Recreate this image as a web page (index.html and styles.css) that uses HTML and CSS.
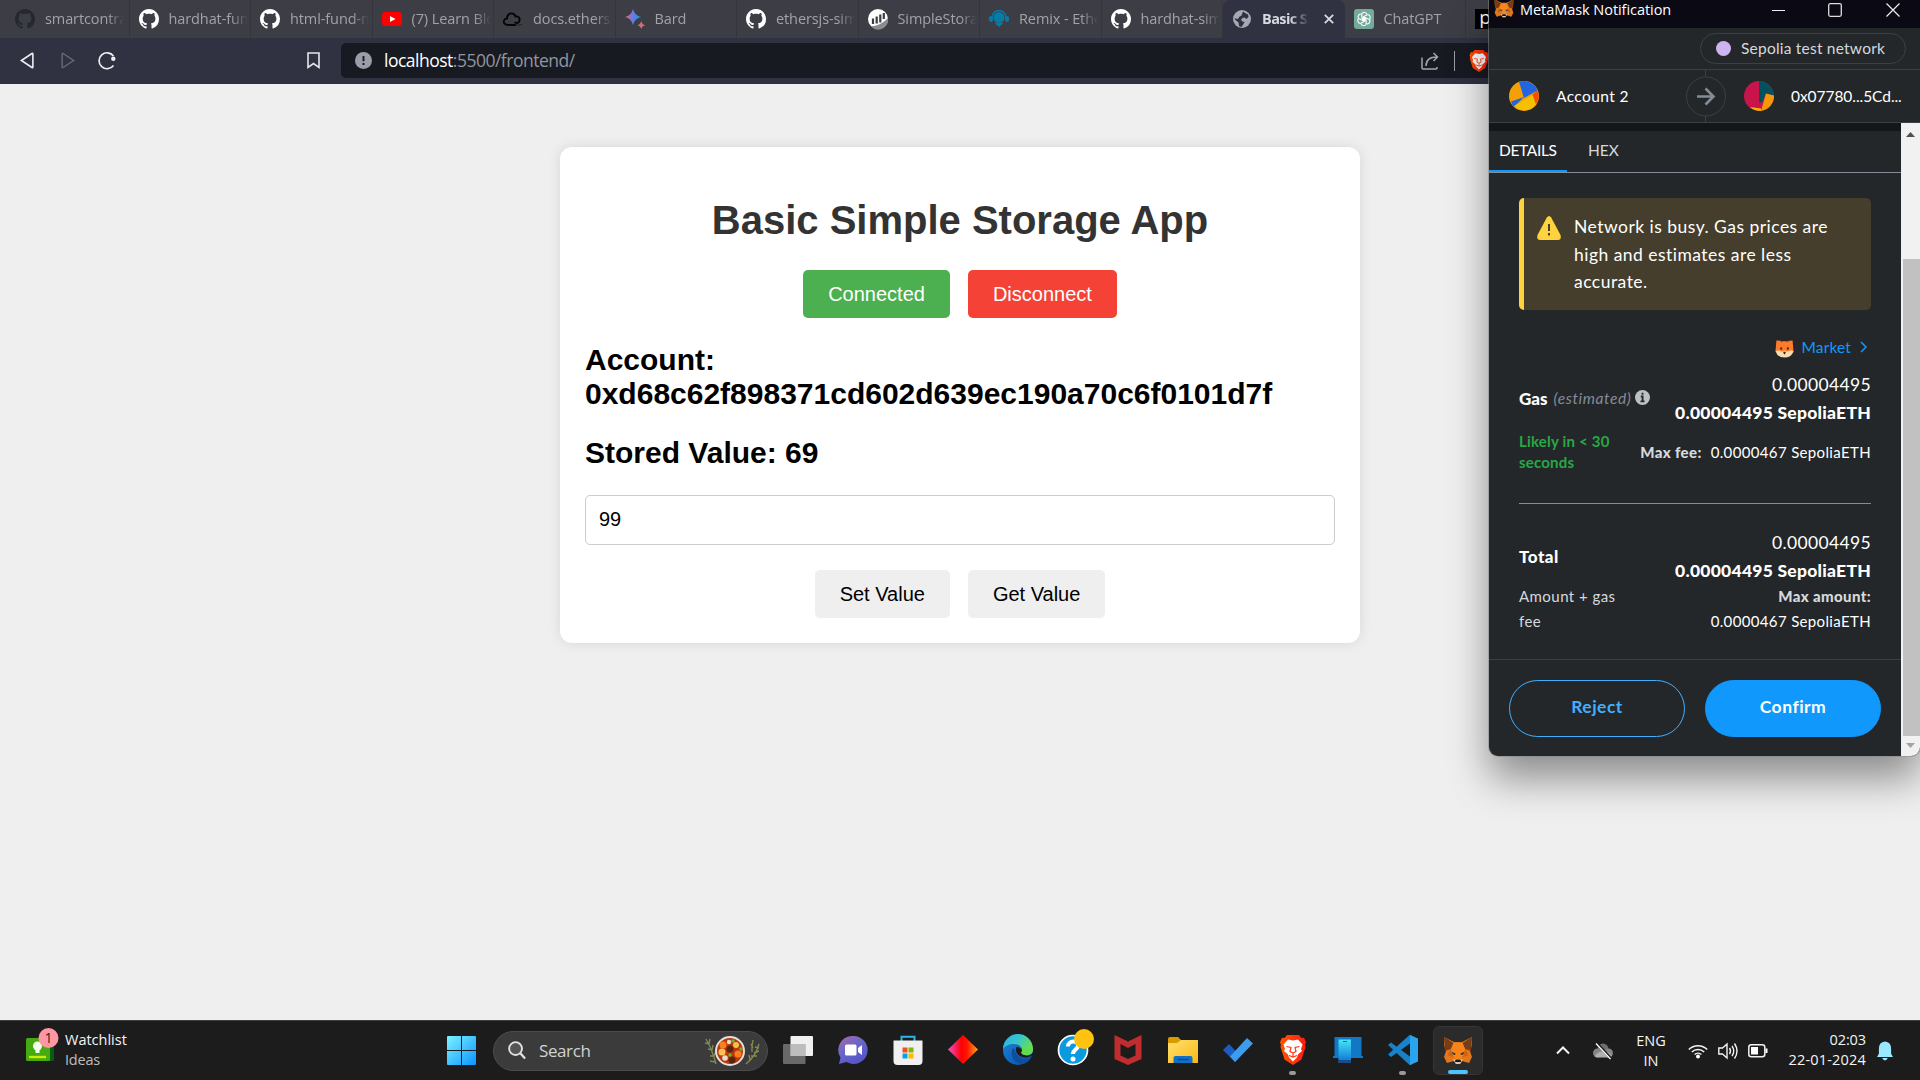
FILE: index.html
```html
<!DOCTYPE html>
<html lang="en">
<head>
<meta charset="utf-8">
<title>Basic Simple Storage App</title>
<link rel="stylesheet" href="styles.css">
</head>
<body>
<svg class="defs" aria-hidden="true">
  <defs>
    <linearGradient id="win" x1="0" y1="0" x2="1" y2="1"><stop offset="0" stop-color="#7df3ff"/><stop offset="1" stop-color="#0a94ff"/></linearGradient>
    <linearGradient id="bard" x1="0" y1="0" x2="1" y2="0"><stop offset="0" stop-color="#e8705f"/><stop offset=".4" stop-color="#8a70d6"/><stop offset=".65" stop-color="#3a8de8"/><stop offset="1" stop-color="#3a8de8"/></linearGradient>
    <linearGradient id="chat" x1="0" y1="0" x2=".6" y2="1"><stop offset="0" stop-color="#a96aa8"/><stop offset=".5" stop-color="#6a66c8"/><stop offset="1" stop-color="#5555c8"/></linearGradient>
    <linearGradient id="dia" x1="0" y1="0" x2="1" y2="0"><stop offset="0" stop-color="#f04fd0"/><stop offset=".45" stop-color="#ff0000"/><stop offset=".65" stop-color="#ff1a00"/><stop offset="1" stop-color="#ffa820"/></linearGradient>
    <linearGradient id="edgeTop" x1="0" y1="0" x2="1" y2=".5"><stop offset="0" stop-color="#2bb0e8"/><stop offset=".5" stop-color="#36c4d0"/><stop offset="1" stop-color="#67e04c"/></linearGradient>
    <linearGradient id="edgeLow" x1="0" y1="0" x2="1" y2="1"><stop offset="0" stop-color="#1b86dd"/><stop offset="1" stop-color="#0c4c9c"/></linearGradient>
    <linearGradient id="folder" x1="0" y1="0" x2="1" y2="1"><stop offset="0" stop-color="#ffe070"/><stop offset="1" stop-color="#fdb813"/></linearGradient>
    <linearGradient id="phone" x1="0" y1="0" x2="0" y2="1"><stop offset="0" stop-color="#48e4f8"/><stop offset="1" stop-color="#0b6fd0"/></linearGradient>
    <linearGradient id="brave" x1="0" y1="0" x2="1" y2="0"><stop offset="0" stop-color="#ff5500"/><stop offset="1" stop-color="#ff1a10"/></linearGradient>
    <symbol id="github" viewBox="0 0 16 16"><path d="M8 0C3.58 0 0 3.58 0 8c0 3.54 2.29 6.53 5.47 7.59.4.07.55-.17.55-.38 0-.19-.01-.82-.01-1.49-2.01.37-2.53-.49-2.69-.94-.09-.23-.48-.94-.82-1.13-.28-.15-.68-.52-.01-.53.63-.01 1.08.58 1.23.82.72 1.21 1.87.87 2.33.66.07-.52.28-.87.51-1.07-1.78-.2-3.64-.89-3.64-3.95 0-.87.31-1.59.82-2.15-.08-.2-.36-1.02.08-2.12 0 0 .67-.21 2.2.82.64-.18 1.32-.27 2-.27s1.36.09 2 .27c1.53-1.04 2.2-.82 2.2-.82.44 1.1.16 1.92.08 2.12.51.56.82 1.27.82 2.15 0 3.07-1.87 3.75-3.65 3.95.29.25.54.73.54 1.48 0 1.07-.01 1.93-.01 2.2 0 .21.15.46.55.38A8.01 8.01 0 0 0 16 8c0-4.42-3.58-8-8-8z"/></symbol>
    <symbol id="fox" viewBox="0 0 30 30">
      <path fill="#e2761b" d="M1 2l10 5h8l10-5v8l-2 6 2 6-3 6-7-2-2 3h-4l-2-3-7 2-3-6 2-6-2-6z"/>
      <path fill="#763d16" d="M1 2l9.500 6-2.500 6-6 2zM29 2l-9.500 6 2.500 6 6 2z"/>
      <path fill="#f6851b" d="M10.500 8h9l2.500 6 5 6-8 1-2 5h-4l-2-5-8-1 5-6z"/>
      <path fill="#cd6116" d="M8 14l2 8-6-2zM22 14l-2 8 6-2z"/>
      <path fill="#233447" d="M9 17l3.500 1.500-.500 1.500-2.500-.8zM21 17l-3.500 1.500.500 1.500 2.500-.8z"/>
      <path fill="#d7c1b3" d="M10 24.500l2.500-.5h5l2.500.5-3 4.500h-4z"/>
      <path fill="#161616" d="M12.500 24.500h5l.500 2.500h-6z"/>
    </symbol>
    <symbol id="lion" viewBox="0 0 26 30">
      <path fill="url(#brave)" d="M7 0h12l2.500 3 2.500-.2L26 7l-1 3 .5 2-4 12.500L13 30l-8.500-5.500L.5 12 1 10 0 7l2-4.200 2.500.2z"/>
      <path fill="#fff" d="M8 4.500l5 1 5-1 4.500 5-1.500 4.500 1 2-4 3.500-1 3-4 4-4-4-1-3-4-3.500 1-2L3.500 9.500z"/>
      <path fill="none" stroke="#ff3a10" stroke-width="1.200" d="M6.500 11.500l4.500 1-1 4 3 1.500 3-1.500-1-4 4.500-1M9 20.500l4 1.500 4-1.500M13 18v3.500"/>
    </symbol>
  </defs>
</svg>

<div class="desktop">
  <header class="tabs">
    <div class="tab first"><svg class="fav dim"><use href="#github"/></svg><span class="label">smartcontract</span></div>
    <div class="tab"><svg class="fav"><use href="#github"/></svg><span class="label">hardhat-fund-me</span></div>
    <div class="tab"><svg class="fav"><use href="#github"/></svg><span class="label">html-fund-me</span></div>
    <div class="tab"><svg class="fav" viewBox="0 0 20 20"><rect y="3" width="20" height="14" rx="3.500" fill="#f00"/><path d="M8 7l5.500 3L8 13z" fill="#fff"/></svg><span class="label">(7) Learn Block</span></div>
    <div class="tab"><svg class="fav" viewBox="0 0 20 20"><path d="M13 16H5.500C2 16 0 14 1 11.500c.5-1.500 2-2 3-2C4 6 6.500 4 9 4.500c2 0 3 1.500 3.500 3 3-.5 4.500 1.500 4 4s-3.500 3.500-5 1.500" fill="none" stroke="#050505" stroke-width="1.900"/><path d="M12 15q3 2 7 .5" fill="none" stroke="#222" stroke-width="1"/></svg><span class="label">docs.ethers.org</span></div>
    <div class="tab"><svg class="fav" viewBox="0 0 20 20"><path fill="url(#bard)" d="M8 0q1.500 6.500 8 8-6.500 1.500-8 8-1.500-6.500-8-8 6.500-1.500 8-8z"/><path fill="#d8677f" d="M16.300 12.300q.7 3.200 3.700 4-3 .8-3.700 3.700-.8-2.900-3.700-3.700 2.900-.8 3.700-4z"/></svg><span class="label">Bard</span></div>
    <div class="tab"><svg class="fav"><use href="#github"/></svg><span class="label">ethersjs-simple</span></div>
    <div class="tab"><svg class="fav" viewBox="0 0 20 20"><circle cx="10" cy="10" r="10" fill="#fff"/><path d="M5 9.500v5.500M8.700 7.500v7M12.300 5.500v8M15.800 4v6" stroke="#3d3d45" stroke-width="2.200"/><path d="M3 17.500Q14 16 20 9a10 10 0 0 1-17 8.500z" fill="#8b8b90"/></svg><span class="label">SimpleStorage</span></div>
    <div class="tab"><svg class="fav" viewBox="0 0 20 20"><path d="M3 8.500a7 7 0 0 1 14 0" fill="none" stroke="#077aa5" stroke-width="1.400"/><circle cx="10" cy="8.500" r="5.500" fill="#077aa5"/><rect y="7" width="4" height="6" rx="2" fill="#077aa5"/><rect x="16" y="7" width="4" height="6" rx="2" fill="#077aa5"/><path d="M5.500 14h9L10 18z" fill="#077aa5"/></svg><span class="label">Remix - Ethereum</span></div>
    <div class="tab"><svg class="fav"><use href="#github"/></svg><span class="label">hardhat-simple</span></div>
    <div class="tab active"><svg class="fav" viewBox="0 0 20 20"><circle cx="10" cy="10" r="9" fill="#a5a9b1"/><path d="M11 2.500l2 1.500 3 1.500.5 2.500-2 2-2-1.500-2 .5-1.500 2 1.500 1.500 2 .5-1 2-2 3-2.500-1-.5-3.500L3 10.500 2.500 9 5 10l1.500-.5L7 8l2.500-1.500z" fill="#303242"/></svg><span class="label short">Basic Simple</span><svg class="tab-close" viewBox="0 0 10 10"><path d="M.8.8l8.400 8.400M9.200.8L.8 9.200" stroke="#d8d9de" stroke-width="1.800"/></svg></div>
    <div class="tab"><svg class="fav" viewBox="0 0 20 20"><rect width="20" height="20" rx="3" fill="#74aa9c"/><g fill="none" stroke="#fff" stroke-width="1.100"><path id="kn" d="M8 4.500a3 3 0 0 1 5.200 1.200L9.500 7.900v4.300"/><use href="#kn" transform="rotate(60 10 10)"/><use href="#kn" transform="rotate(120 10 10)"/><use href="#kn" transform="rotate(180 10 10)"/><use href="#kn" transform="rotate(240 10 10)"/><use href="#kn" transform="rotate(300 10 10)"/></g></svg><span class="label">ChatGPT</span></div>
    <div class="tab"><span class="fav-p">p</span></div>
  </header>

  <nav class="toolbar">
    <svg class="ic back" viewBox="0 0 15 18"><path d="M12.800 1.500L1.500 9l11.300 7.500c.6.300 1 0 1-.6V2.100c0-.6-.4-.9-1-.6z" fill="none" stroke="#eceef2" stroke-width="1.700"/></svg>
    <svg class="ic fwd" viewBox="0 0 15 18"><path d="M2.200 1.500L13.500 9 2.200 16.500c-.6.300-1 0-1-.6V2.100c0-.6.400-.9 1-.6z" fill="none" stroke="#676a77" stroke-width="1.500"/></svg>
    <svg class="ic reload" viewBox="0 0 18 18"><path d="M15.500 4A8 8 0 1 0 15.500 13.500" fill="none" stroke="#eceef2" stroke-width="1.700"/><circle cx="15.300" cy="6.700" r="2.200" fill="#eceef2"/></svg>
    <svg class="ic bookmark" viewBox="0 0 13 17"><path d="M1 1h11v14.500l-5.500-4-5.500 4z" fill="none" stroke="#e4e6ea" stroke-width="1.600"/></svg>
    <div class="urlbar">
      <svg class="info" viewBox="0 0 17 17"><circle cx="8.500" cy="8.500" r="8.500" fill="#9a9ea8"/><path d="M8.500 4v5.300M8.500 11v2" stroke="#181a22" stroke-width="1.900"/></svg>
      <span class="url"><b>localhost</b>:5500/frontend/</span>
      <svg class="share" viewBox="0 0 18 18"><path d="M1 5.500V16q0 1 1 1h13q1 0 1-1v-1M5 14C5 8 8 5 16 5M12.500 1L16.500 5l-4 4" fill="none" stroke="#a3a6ad" stroke-width="1.500"/></svg>
      <i class="split"></i>
      <svg class="shield"><use href="#lion"/></svg>
    </div>
  </nav>

  <main class="page">
    <section class="card">
      <h1>Basic Simple Storage App</h1>
      <div class="buttons"><button class="btn ok">Connected</button><button class="btn danger">Disconnect</button></div>
      <h2>Account:<br>0xd68c62f898371cd602d639ec190a70c6f0101d7f</h2>
      <h2>Stored Value: 69</h2>
      <input class="value" value="99">
      <div class="buttons"><button class="btn">Set Value</button><button class="btn">Get Value</button></div>
    </section>
  </main>

  <footer class="taskbar">
    <div class="widget">
      <svg class="w-icon" viewBox="0 0 34 36"><rect x="20" y="10" width="8" height="23" rx="1.500" fill="#0b5a12"/><rect y="10" width="24" height="23" rx="1.500" fill="#45ab10"/><circle cx="11.500" cy="18" r="4.500" fill="#f4fbe8"/><path d="M9.500 21h4v4h-4z" fill="#f4fbe8"/><path d="M3 29h17" stroke="#c8ee00" stroke-width="2.400"/><circle cx="22.500" cy="10" r="10" fill="#ff97a3"/><text x="22.500" y="15.200" text-anchor="middle" class="w-count">1</text></svg>
      <p class="w-text"><span>Watchlist</span><span class="sub">Ideas</span></p>
    </div>
    <svg class="start" viewBox="0 0 29 29"><path fill="url(#win)" d="M1 0h13v14H0V1q0-1 1-1zM15 0h13q1 0 1 1v13H15zM0 15h14v14H1q-1 0-1-1zM15 15h14v13q0 1-1 1H15z"/></svg>
    <div class="search">
      <svg class="mag" viewBox="0 0 19 20"><circle cx="8" cy="8" r="6.800" fill="#555" stroke="#e2e2e2" stroke-width="2"/><path d="M13 13l5 5.500" stroke="#e2e2e2" stroke-width="2.400"/></svg>
      <span class="search-text">Search</span>
      <svg class="food" viewBox="0 0 56 30"><g fill="none" stroke="#7f8a50" stroke-width="1.400"><path d="M1 3q6 10 10 25M0 7l4 1 1-5M3 13l4 1 1-5M5 20l4 0 2-5M5 25l5 1M54 8q-3 12-13 20M48 4l-1 6 0 6M46 8l2 4M54 15l-5 2M52 20l-6 0M44 19l1 5M50 11l4 1"/></g><circle cx="25" cy="15" r="14" fill="#b9380c" stroke="#e4dfdc" stroke-width="2"/><g><circle cx="18" cy="9" r="3.500" fill="#ff7f1e"/><circle cx="17" cy="16" r="3.500" fill="#ffc35a"/><circle cx="31" cy="9" r="3" fill="#f6c04f"/><circle cx="33" cy="18" r="3.500" fill="#ff7f1e"/><circle cx="25" cy="13" r="3.500" fill="#5a2410"/><circle cx="27" cy="24" r="3.500" fill="#5a2410"/><circle cx="20" cy="22" r="2.800" fill="#e8dccd"/><circle cx="24" cy="6" r="2.200" fill="#e8dccd"/><circle cx="36" cy="13" r="1.700" fill="#70b52c"/><circle cx="28" cy="5" r="1.700" fill="#70b52c"/><circle cx="25" cy="19" r="1.700" fill="#70b52c"/></g></svg>
    </div>
    <div class="apps">
      <div class="app"><svg viewBox="0 0 30 30"><rect x="7.500" y="1" width="22.500" height="20" rx="1" fill="#f0f0f0"/><rect y="9" width="22.500" height="20" rx="1" fill="#8a8a8a" fill-opacity=".7"/><path d="M7.500 9h15v12h-15z" fill="#bdbdbd"/></svg></div>
      <div class="app"><svg viewBox="0 0 30 30"><path d="M15.500 1a14 14 0 1 1-7 26L1 29l1.500-6.500A14 14 0 0 1 15.500 1z" fill="url(#chat)"/><rect x="7" y="9.500" width="11.500" height="11" rx="1.500" fill="#fff"/><path d="M20 13l4-3v10l-4-3z" fill="#fff"/></svg></div>
      <div class="app"><svg viewBox="0 0 30 30"><path d="M8.500 7V1.800h13V7" fill="none" stroke="#29b5e8" stroke-width="2"/><path d="M.5 5.500h29V26q0 4-4 4h-21q-4 0-4-4z" fill="#f0f0f0"/><path d="M8.500 2v4.500h13V2" fill="none"/><path d="M9.500 12.500h5v5h-5z" fill="#f25022"/><path d="M15.500 12.500h5v5h-5z" fill="#7fba00"/><path d="M9.500 18.500h5v5h-5z" fill="#00a4ef"/><path d="M15.500 18.500h5v5h-5z" fill="#ffb900"/></svg></div>
      <div class="app"><svg viewBox="0 0 30 30"><path d="M15 0l15 14.500L15 29 0 14.500z" fill="url(#dia)"/></svg></div>
      <div class="app"><svg viewBox="0 0 30 30"><circle cx="15" cy="15" r="15" fill="url(#edgeLow)"/><path d="M0 14A15 15 0 0 1 30 14c0 5-4 7-8 6-3-.5-5-2-3-4 1-3-2-7-8-7-5 0-9 2-11 5z" fill="url(#edgeTop)"/><path d="M10 13c-4 7 1 16 10 16 4-1 6-3 8-6-6 3-15 0-16-8z" fill="#0d4f9e"/><path d="M13.500 12c-2 4 1 9 6 10 4 1 7 0 9.500-1.800l1 2.800h1V17l-4 3c-4 1-9 0-8-3 1-2-2-5-5.500-5z" fill="#1c1c1c"/><path d="M30 14c0 5-4 7-8 6-3-.5-5-2-3-4 .5-2 0-3-1-5z" fill="#62db50"/></svg></div>
      <div class="app"><svg class="wide" viewBox="0 0 36 36"><ellipse cx="15" cy="21" rx="14.500" ry="14.500" fill="#0a9ade" stroke="#fff" stroke-width="1.700"/><path d="M10 17.500c0-7 11-6 10-.5-.5 3.500-5 3.500-5 8" fill="none" stroke="#fff" stroke-width="4"/><circle cx="15" cy="30" r="2.500" fill="#fff"/><circle cx="26" cy="10" r="10" fill="#ffc20e"/></svg></div>
      <div class="app"><svg viewBox="0 0 30 30"><path d="M1.500 0L15 6.500 28.500 0v24L15 30 1.500 24zM7.500 9v11.500l7.500 3.500 7.500-3.500V9L15 13z" fill="#c12c2e" fill-rule="evenodd"/></svg></div>
      <div class="app"><svg viewBox="0 0 30 30"><path d="M0 4q0-2 2-2h8l3 3v6H0z" fill="#d89b00"/><path d="M0 8h9l4-3h17v23H0z" fill="url(#folder)"/><path d="M5.500 28v-5q0-2 2-2h15q2 0 2 2v5z" fill="#1070c8"/><path d="M9.500 24.500h11" stroke="#084a90" stroke-width="1.500"/></svg></div>
      <div class="app"><svg viewBox="0 0 30 30"><path d="M0 15l6-6 11.500 12L12 27z" fill="#1b5cbe"/><path d="M12 27l-5-5.500L24 3l6 5.500z" fill="#3b9cf0"/></svg></div>
      <div class="app run"><svg viewBox="0 0 30 30"><use href="#lion" x="2" width="26" height="30"/></svg></div>
      <div class="app"><svg viewBox="0 0 30 30"><path d="M1.500 2h27v19H30v2H0v-2h1.500z" fill="#1277c4"/><path d="M5.500 4.500H18V28H5.500z" fill="url(#phone)"/><path d="M5.500 25H18v3H5.500z" fill="#1a4b86"/><path d="M10 6.500h4" stroke="#085"/></svg></div>
      <div class="app run"><svg viewBox="0 0 30 30"><path d="M0 10l3-2.500L24 23v6.500L21.500 30z" fill="#1a7fc4"/><path d="M0 19.500L3 22 24 7V.5L21.500 0z" fill="#1583cf"/><path d="M22 0l8 3.500v23L22 30z" fill="#2aa4ee"/></svg></div>
      <div class="app current"><svg viewBox="0 0 30 30"><use href="#fox" width="30" height="30"/></svg></div>
    </div>
    <div class="tray">
      <svg class="caret" viewBox="0 0 14 9"><path d="M1 7.500l6-6 6 6" fill="none" stroke="#f2f2f2" stroke-width="2"/></svg>
      <svg class="cloud" viewBox="0 0 20 18"><circle cx="10" cy="7" r="5.500" fill="#6e6e6e"/><circle cx="4.500" cy="11" r="4.500" fill="#858585"/><circle cx="15.500" cy="11" r="4.500" fill="#858585"/><path d="M2 14q3-5 8-4.500 6 0 9 4-1 2-3 2H5q-2 0-3-1.500z" fill="#b0b0b0"/><path d="M3.500 1L18 16.500" stroke="#1c1c1c" stroke-width="2.600"/><path d="M3 1.500L17.500 17" stroke="#fff" stroke-width="1.300"/></svg>
      <p class="lang"><span>ENG</span><span>IN</span></p>
      <svg class="wifi" viewBox="0 0 20 16"><g fill="none" stroke="#f2f2f2" stroke-width="1.500"><path d="M.8 6.500a13 13 0 0 1 18.400 0M3.800 9a8.800 8.800 0 0 1 12.400 0M6.600 11.500a5 5 0 0 1 6.800 0"/></g><circle cx="10" cy="13.500" r="2" fill="#fff"/></svg>
      <svg class="vol" viewBox="0 0 20 18"><g fill="none" stroke="#f2f2f2" stroke-width="1.400"><path d="M.8 6h3.700L9 2v14l-4.500-4H.8zM11.500 6q2 3 0 6M14 4q3.500 5 0 10M16.500 1.500q5 7.500 0 15"/></g></svg>
      <svg class="bat" viewBox="0 0 20 14"><rect x=".8" y=".8" width="16" height="12" rx="2.500" fill="none" stroke="#f2f2f2" stroke-width="1.500"/><rect x="3" y="3" width="7" height="7.500" fill="#fff"/><path d="M18.500 4.500v4.500" stroke="#fff" stroke-width="2"/></svg>
      <p class="clock"><span>02:03</span><span class="date">22-01-2024</span></p>
      <svg class="bell" viewBox="0 0 17 20"><path d="M2 13V8q0-7.500 6.500-8Q15 .5 15 8v5l2 3.500H0zM5.500 17.500h6q-1 2.500-3 2.500t-3-2.500z" fill="#98e9ff"/></svg>
    </div>
  </footer>

  <aside class="wallet">
    <div class="titlebar">
      <svg class="t-fox"><use href="#fox"/></svg>
      <span class="t-title">MetaMask Notification</span>
      <svg class="winctl" viewBox="0 0 128 16"><path d="M0 8.500h13M114.500 1.500l13 13M127.500 1.500l-13 13" stroke="#eee" stroke-width="1.200"/><rect x="56.700" y="1.700" width="12.600" height="12.600" rx="1.500" fill="none" stroke="#ddd" stroke-width="1.300"/></svg>
    </div>
    <div class="network"><div class="pill"><i></i><span>Sepolia test network</span></div></div>
    <div class="parties">
      <svg class="avatar" viewBox="0 0 30 30"><circle cx="15" cy="15" r="15" fill="#f3a006"/><path d="M10 .8A15 15 0 0 1 28.500 9.500L15 17z" fill="#2365e0"/><path d="M2 20.500L15 16l-10 10q-2-2-3-5.500z" fill="#2365e0"/><path d="M5 25L23.500 14 28 22.500A15 15 0 0 1 5 25z" fill="#f5c000"/><path d="M23.500 13.500l5-4a15 15 0 0 1-1.500 14z" fill="#fb4a09"/></svg>
      <span class="from">Account 2</span>
      <svg class="arrow" viewBox="0 0 40 52"><path d="M19.500 0v6M19.500 46v6" stroke="#3b4046"/><circle cx="20" cy="26.500" r="19.500" fill="none" stroke="#3b4046"/><path d="M11 26.500H27.500M19.500 18.500l8 8-8 8" fill="none" stroke="#848c96" stroke-width="2.600"/></svg>
      <svg class="avatar" viewBox="0 0 30 30"><circle cx="15" cy="15" r="15" fill="#c8144a"/><path d="M15 0a15 15 0 0 1 15 14.500l-8-2-4 9h-3z" fill="#03515c"/><path d="M22 12.500l8 2A15 15 0 0 1 17 30z" fill="#f3980a"/><path d="M6 26l11 1.500V30q-7 0-11-4z" fill="#f5b800"/></svg>
      <span class="to">0x07780...5Cd...</span>
    </div>
    <div class="body">
      <div class="content">
        <div class="wtabs"><span class="wtab on">DETAILS</span><span class="wtab">HEX</span></div>
        <div class="details">
          <div class="warning">
            <svg viewBox="0 0 24 24"><path d="M9.800 1.500q2.200-3 4.400 0L23.500 19q1.500 5-3 5h-17q-4.500 0-3-5z" fill="#ffd33d"/><path d="M12 8v7M12 17v2.500" stroke="#453e2c" stroke-width="2"/></svg>
            <p>Network is busy. Gas prices are<br>high and estimates are less<br>accurate.</p>
          </div>
          <div class="market">
            <svg class="emoji" viewBox="0 0 20 20"><path d="M1.500 1.500l5.500.5h6l5.500-.5 1 12.500-9.500 5L.5 13z" fill="#ff7a2a"/><path d="M6 .5l2 2h4l2-2v2.500H6z" fill="#5a2c12"/><path d="M.5 12.500q4-1 6.500 1l3-1.500 3 1.500q2.500-2 6.500-1Q17.500 19.500 10 19.500T.5 12.500z" fill="#fbdcae"/><path d="M5.500 9h2v2h-2zM12.500 9h2v2h-2zM8.500 13.500h3L10.500 16h-1z" fill="#33221a"/></svg>
            <span>Market</span>
            <svg class="chev" viewBox="0 0 7 12"><path d="M1 1l5 5-5 5" fill="none" stroke="#1098fc" stroke-width="1.500"/></svg>
          </div>
          <div class="row gas">
            <div class="name"><b>Gas</b><em>(estimated)</em><svg viewBox="0 0 15 15"><circle cx="7.500" cy="7.500" r="7.500" fill="#bbc0c5"/><path d="M7.500 2.700v2M5.800 6.500h1.800v4.800M5.500 11.300h4" stroke="#24272a" stroke-width="1.800" fill="none"/></svg></div>
            <div class="amount"><span>0.00004495</span><b>0.00004495 SepoliaETH</b></div>
          </div>
          <div class="row eta">
            <div class="likely">Likely in &lt; 30<br>seconds</div>
            <div class="max"><b>Max fee:</b><span>0.0000467 SepoliaETH</span></div>
          </div>
          <div class="row total">
            <div class="name"><b class="tot">Total</b></div>
            <div class="amount"><span>0.00004495</span><b>0.00004495 SepoliaETH</b></div>
          </div>
          <div class="row sum">
            <div class="what">Amount + gas<br>fee</div>
            <div class="max stack"><b class="ma">Max amount:</b><span>0.0000467 SepoliaETH</span></div>
          </div>
        </div>
        <div class="actions"><button class="act reject">Reject</button><button class="act confirm">Confirm</button></div>
      </div>
      <div class="scrollbar">
        <svg viewBox="0 0 19 24"><path d="M5 14l4.500-5 4.500 5z" fill="#505050"/></svg>
        <i class="thumb"></i>
        <svg class="down" viewBox="0 0 19 20"><path d="M5 7l4.500 5L14 7z" fill="#a3a3a3"/></svg>
      </div>
    </div>
  </aside>
</div>
</body>
</html>
```
FILE: styles.css
```css
* { box-sizing: border-box; }
body { margin: 0; overflow: hidden; font-family: "Open Sans", "Noto Sans", sans-serif; }
p { margin: 0; }
svg { display: block; flex: none; overflow: visible; }
button, input { font: inherit; margin: 0; }
.defs { position: absolute; width: 0; height: 0; }
.desktop { position: relative; width: 1920px; height: 1080px; display: flex; flex-direction: column; overflow: hidden; }

/* Browser tabs */
.tabs { height: 38px; flex: none; display: flex; padding-left: 6px; background: #3d3d45; overflow: hidden; }
.tab { width: 121.500px; height: 38px; flex: none; display: flex; align-items: center; gap: 10px; padding-left: 9px; border-right: 1px solid #35353c; }
.tab.first { width: 123.500px; }
.fav { width: 20px; height: 20px; fill: #fff; }
.dim { fill: #24292f; }
.label { width: 80px; overflow: hidden; white-space: nowrap; font-size: 14.500px; letter-spacing: -.1px; line-height: 24px; color: #a2a2a8; mask-image: linear-gradient(90deg, #000 62px, transparent 79px); }
.tab.active { background: #303242; border-color: #303242; border-radius: 8px 8px 0 0; }
.short { width: 47px; font-weight: 700; letter-spacing: -.6px; color: #d8d9de; mask-image: linear-gradient(90deg, #000 28px, transparent 47px); }
.tab-close { width: 10px; height: 10px; margin-left: 5px; }
.fav-p { width: 20px; height: 20px; background: #000; color: #fff; font-size: 19px; line-height: 17px; text-align: center; }

/* Navigation bar */
.toolbar { height: 46px; flex: none; display: flex; align-items: center; padding: 5px 0 6px 20px; background: #303242; }
.back { width: 14px; height: 17px; }
.fwd { width: 14px; height: 17px; margin-left: 27px; }
.reload { width: 18px; height: 18px; margin-left: 23px; }
.bookmark { width: 13px; height: 17px; margin-left: 191px; }
.urlbar { width: 1200px; height: 35px; margin-left: 21px; padding-left: 14px; display: flex; align-items: center; border-radius: 5px; background: #181a22; flex: none; }
.info { width: 17px; height: 17px; }
.url { width: 1037px; margin-left: 12px; padding-bottom: 1px; font-size: 17.500px; letter-spacing: -.5px; color: #92959d; }
.url b { font-weight: 400; color: #fff; }
.share { width: 18px; height: 18px; }
.split { width: 1px; height: 20px; margin: 0 14px 0 15px; background: #9a9da5; }
.shield { width: 20px; height: 22px; }

/* Storage app */
.page { flex: 1; display: flex; justify-content: center; align-items: flex-start; padding-top: 63px; background: #efefef; font-family: "Liberation Sans", Arial, sans-serif; }
.card { width: 800px; height: 496px; padding: 27px 25px 25px; border-radius: 12px; background: #fff; box-shadow: 0 0 13px rgba(0, 0, 0, .1); display: flex; flex-direction: column; }
h1 { margin: 22px 0 26px; font-size: 40px; line-height: 48px; text-align: center; color: #333; }
h2 { margin: 25px 0 0; font-size: 30px; line-height: 34px; color: #000; }
h2 + h2 { margin: 25px 0 25px; }
.buttons { display: flex; justify-content: center; gap: 18px; }
.btn { height: 48px; padding: 0 25px; border: 0; border-radius: 5px; font-size: 20px; color: #000; background: #efefef; }
.ok { background: #4caf50; color: #fff; }
.danger { background: #f44336; color: #fff; }
.value { width: 100%; height: 50px; margin-bottom: 25px; padding: 0 13px 2px; border: 1px solid #ccc; border-radius: 5px; font-size: 20px; color: #000; }

/* Taskbar */
.taskbar { height: 60px; flex: none; display: flex; align-items: center; padding: 0 27px 0 26px; border-top: 1px solid #3b4040; background: #1c1c1c; color: #f4f4f4; font-size: 14.500px; }
.widget { width: 421px; display: flex; align-items: center; gap: 4px; }
.w-icon { width: 34px; height: 36px; margin-bottom: 10px; }
.w-count { font-size: 14px; fill: #222; }
.w-text { display: flex; flex-direction: column; line-height: 20px; letter-spacing: 0; margin: 0 0 2px 1px; }
.sub { color: #bdbdbd; letter-spacing: -.2px; }
.start { width: 29px; height: 29px; }
.search { width: 275px; height: 40px; margin-left: 17px; padding: 0 6px 0 14px; display: flex; align-items: center; border: 1px solid #4c4c4c; border-radius: 20px; background: #3b3b3b; }
.mag { width: 18px; height: 19px; }
.search-text { flex: 1; margin-left: 13px; font-size: 17px; letter-spacing: -.4px; color: #d2d2d2; }
.food { width: 56px; height: 30px; }
.apps { display: flex; margin-left: 2px; }
.app { position: relative; width: 55px; height: 49px; display: flex; align-items: center; justify-content: center; padding-bottom: 1px; }
.app svg { width: 30px; height: 30px; }
.app .wide { width: 36px; height: 36px; margin: -6px 0 0 6px; }
.app.run::after, .app.current::after { content: ""; position: absolute; left: 24px; bottom: 0; width: 7px; height: 4px; border-radius: 2px; background: #999; }
.app.current { width: 50px; margin-left: 2.500px; border-radius: 6px; background: #2b2b2b; border: 1px solid #353535; }
.app.current::after { left: 14px; width: 20px; background: #4cc2ff; }
.tray { margin-left: auto; display: flex; align-items: center; }
.tray p { display: flex; flex-direction: column; line-height: 20px; }
.caret { width: 14px; height: 9px; }
.cloud { width: 20px; height: 18px; margin-left: 23px; }
.lang { width: 40px; margin-left: 18px; align-items: center; }
.wifi { width: 20px; height: 16px; margin-left: 17px; }
.vol { width: 20px; height: 18px; margin-left: 10px; }
.bat { width: 20px; height: 14px; margin-left: 10px; }
.clock { width: 98px; margin-bottom: 2px; align-items: flex-end; letter-spacing: -.1px; }
.date { letter-spacing: .18px; }
.bell { width: 16px; height: 20px; margin-left: 11px; }

/* Wallet popup window */
.wallet { position: absolute; z-index: 2; left: 1489px; top: 0; width: 431px; height: 756px; display: flex; flex-direction: column; border-radius: 0 0 9px 9px; background: #24272a; color: #fff; font-family: Lato, "Open Sans", sans-serif; font-size: 15px; box-shadow: 0 0 0 1px #8888, 0 22px 40px rgba(0, 0, 0, .42); }
.wallet b { font-weight: 900; }
.titlebar { height: 28px; flex: none; display: flex; align-items: flex-start; padding-left: 5px; background: #0b0a14; font-family: "Open Sans", sans-serif; }
.t-fox { width: 20px; height: 20px; margin-top: -2px; }
.t-title { width: 252px; margin-left: 6px; font-size: 14.500px; line-height: 20px; letter-spacing: -.05px; white-space: nowrap; }
.winctl { width: 128px; height: 16px; margin-top: 2px; }
.network { height: 42px; flex: none; display: flex; justify-content: flex-end; padding: 5px 14px; border-bottom: 1px solid #3b4046; }
.pill { width: 206px; height: 31px; display: flex; align-items: center; gap: 10px; padding-left: 15px; border: 1px solid #3b4046; border-radius: 16px; color: #d6d9dc; white-space: nowrap; }
.pill i { width: 15px; height: 15px; border-radius: 50%; background: #cdb4f0; }
.pill span { padding-bottom: 2px; font-size: 15.500px; letter-spacing: .22px; }
.parties { height: 53px; flex: none; display: flex; align-items: center; padding-left: 20px; border-bottom: 1px solid #3b4046; }
.avatar { width: 30px; height: 30px; }
.from { width: 130px; margin-left: 17px; font-size: 15.500px; letter-spacing: .4px; }
.arrow { width: 40px; height: 52px; margin-right: 18px; }
.to { margin-left: 17px; font-size: 15.500px; letter-spacing: -.05px; }
.body { flex: 1; display: flex; min-height: 0; }
.content { width: 412px; padding-top: 8px; display: flex; flex-direction: column; background: linear-gradient(#141618 8px, transparent 8px); }
.wtabs { height: 42px; flex: none; display: flex; gap: 11px; border-bottom: 1px solid #848c96; }
.wtab { padding: 0 10px; line-height: 38px; font-size: 15.500px; color: #d6d9dc; }
.wtab.on { width: 78px; border-bottom: 2px solid #1098fc; color: #fff; letter-spacing: -.35px; }
.details { height: 487px; flex: none; padding: 25px 30px 0; border-bottom: 1px solid #3b4046; }
.warning { height: 112px; display: flex; gap: 13px; padding: 15px 0 0 13px; border-left: 5px solid #ffd33d; border-radius: 5px; background: #453e2c; font-size: 17.500px; line-height: 27.500px; letter-spacing: .47px; white-space: nowrap; }
.warning svg { width: 24px; height: 24px; margin-top: 3px; }
.market { height: 20px; margin-top: 27px; padding-right: 4px; display: flex; align-items: center; justify-content: flex-end; color: #1098fc; }
.emoji { width: 19px; height: 19px; margin: 3px 7px 0 0; }
.market span { font-size: 15.500px; letter-spacing: .15px; }
.chev { width: 7px; height: 12px; margin-left: 9px; }
.row { display: flex; justify-content: space-between; white-space: nowrap; }
.gas { height: 56px; margin-top: 14px; }
.name { display: flex; align-items: center; font-size: 17px; height: 54px; }
.name em { margin: 0 4px 0 6px; font-size: 15.500px; color: #848c96; letter-spacing: .6px; }
.name svg { width: 15px; height: 15px; margin-bottom: 2px; }
.tot { letter-spacing: .5px; }
.amount { display: flex; flex-direction: column; align-items: flex-end; font-size: 17.500px; line-height: 28px; letter-spacing: .35px; }
.amount b { letter-spacing: .25px; }
.eta { height: 77px; padding-top: 4px; border-bottom: 1px solid #848c96; }
.likely { font-weight: 700; font-size: 15px; line-height: 21px; letter-spacing: .2px; color: #28a745; }
.max { font-size: 15px; letter-spacing: .35px; }
.max b { color: #d6d9dc; margin-right: 9px; }
.eta .max { padding-top: 11px; line-height: 20px; }
.total { margin-top: 25px; height: 56px; }
.sum { margin-top: -1px; font-size: 15px; line-height: 25px; letter-spacing: .45px; color: #d6d9dc; }
.stack { display: flex; flex-direction: column; align-items: flex-end; color: #fff; }
.max .ma { margin: 0; }
.actions { flex: 1; display: flex; gap: 20px; padding: 20px 0 0 20px; }
.act { width: 176px; height: 57px; padding: 0 0 4px; border: 1px solid #43aefc; border-radius: 29px; background: none; color: #43aefc; font-size: 17.500px; letter-spacing: .5px; font-weight: 700; }
.confirm { background: #1098fc; border-color: #1098fc; color: #fff; }
.scrollbar { width: 19px; display: flex; flex-direction: column; background: #f1f1f1; border-radius: 0 0 9px 0; }
.scrollbar svg { width: 19px; height: 24px; }
.thumb { width: 17px; height: 477px; margin: 112px 0 0 2px; background: #c1c1c1; }
.scrollbar .down { height: 20px; }
```
